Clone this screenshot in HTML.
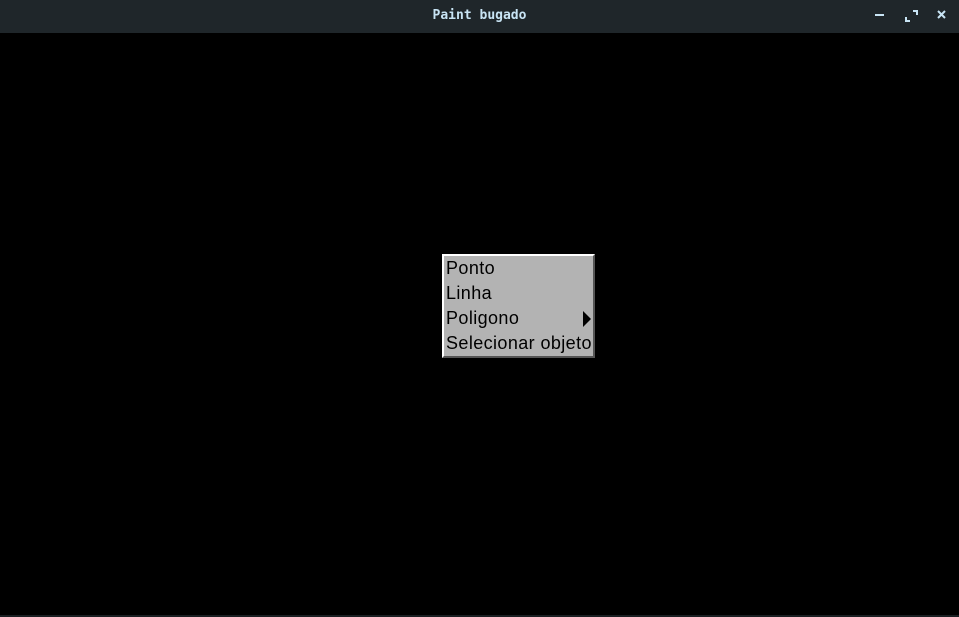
<!DOCTYPE html>
<html><head><style>
html,body{margin:0;padding:0;width:959px;height:617px;background:#000;overflow:hidden}
#tb{position:absolute;left:0;top:0;width:959px;height:33px;background:#1f262a;}
#title{position:absolute;left:0;width:959px;top:8px;text-align:center;font:bold 13px "DejaVu Sans Mono","Liberation Mono",monospace;color:#c8e4f4}
#menu{position:absolute;left:442px;top:254px;width:149px;height:100px;background:#b3b3b3;border-top:2px solid #fff;border-left:2px solid #fff;border-right:2px solid #555;border-bottom:2px solid #555}
.it{position:absolute;left:2px;font:18px "Liberation Sans",sans-serif;letter-spacing:0.4px;color:#000;line-height:25px;white-space:nowrap}
#arr{position:absolute;left:139px;top:55px;width:0;height:0;border-top:8px solid transparent;border-bottom:8px solid transparent;border-left:8px solid #000}
#bl{position:absolute;left:0;top:615px;width:959px;height:2px;background:#1a1f22}
</style></head><body>
<div id="tb"><div id="title">Paint bugado</div>
<svg style="position:absolute;left:870px;top:8px" width="85" height="16">
<rect x="5" y="6" width="9" height="2" fill="#c8e4f4"/>
<path d="M36 9v4h4M43 3h4v4" stroke="#c8e4f4" stroke-width="2" fill="none"/>
<path d="M68 2l7 7M75 2l-7 7" stroke="#c8e4f4" stroke-width="2" fill="none" transform="translate(0,1)"/>
</svg></div>
<div id="menu">
<div class="it" style="top:0px">Ponto</div>
<div class="it" style="top:25px">Linha</div>
<div class="it" style="top:50px">Poligono</div>
<div id="arr"></div>
<div class="it" style="top:75px">Selecionar objeto</div>
</div>
<div id="bl"></div>
</body></html>
